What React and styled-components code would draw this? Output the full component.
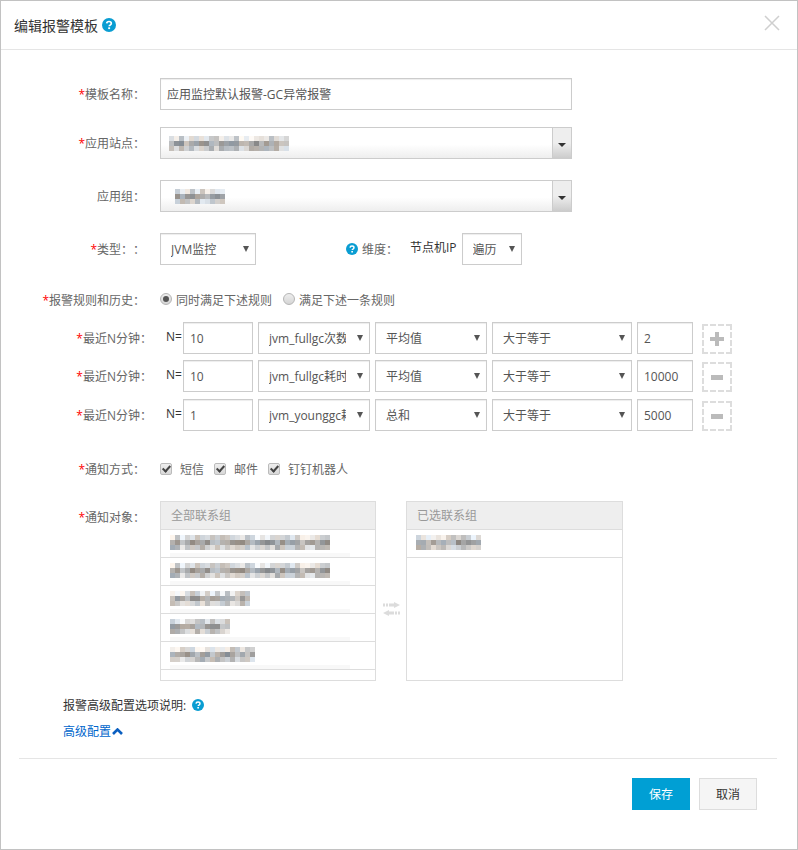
import React from "react";
import styled, { createGlobalStyle } from "styled-components";

const GlobalStyle = createGlobalStyle`
  html, body {
    margin: 0;
    padding: 0;
    background: #fff;
  }
  body {
    font-family: "Open Sans", "Noto Sans CJK SC", sans-serif;
    font-size: 12px;
    color: #666;
  }
`;

// the blurred out names in the screenshot, cells come from a small seeded generator
function mosaicCells(seed, cols, rows) {
  let n = seed;
  const next = () => {
    n = (n * 9301 + 49297) % 233280;
    return n / 233280;
  };
  const base = [220, 168, 202];
  const cells = [];
  for (let r = 0; r < rows; r++) {
    for (let c = 0; c < cols; c++) {
      const v = Math.round(base[r] + (next() - 0.5) * 64);
      const tint = Math.round((next() - 0.5) * 18);
      const g = Math.min(255, Math.max(90, v));
      cells.push({
        r,
        c,
        fill: `rgb(${Math.min(255, g + tint)},${g},${Math.min(255, g - tint)})`,
      });
    }
  }
  return cells;
}

function Mosaic({ seed, cols, rows = 3, size = 5 }) {
  return (
    <svg width={cols * size} height={rows * size} style={{ display: "block" }}>
      {mosaicCells(seed, cols, rows).map((cell) => (
        <rect
          key={`${cell.r}-${cell.c}`}
          x={cell.c * size}
          y={cell.r * size}
          width={size}
          height={size}
          fill={cell.fill}
        />
      ))}
    </svg>
  );
}

function HelpIcon({ size = 12 }) {
  return (
    <svg width={size} height={size} viewBox="0 0 14 14" style={{ display: "block", flex: "none" }}>
      <circle cx="7" cy="7" r="7" fill="#0a9dd2" />
      <path
        d="M4.7 5.4C4.8 4.1 5.8 3.5 7 3.5c1.3 0 2.3.7 2.3 1.9 0 1-.7 1.4-1.3 1.8-.5.3-.7.5-.7 1.1"
        fill="none"
        stroke="#fff"
        strokeWidth="1.7"
      />
      <rect x="6.2" y="9.3" width="1.9" height="1.8" fill="#fff" />
    </svg>
  );
}

function ExchangeIcon() {
  return (
    <svg width="17" height="14" viewBox="0 0 17 14" style={{ display: "block" }}>
      <path d="M0 1.5h2v3H0zM3 1.5h2v3H3zM6 1.5h5v3H6zM11 0l6 3-6 3z" fill="#dcdcdc" />
      <path d="M15 9.5h2v3h-2zM12 9.5h2v3h-2zM6 9.5h5v3H6zM6 8l-6 3 6 3z" fill="#dcdcdc" />
    </svg>
  );
}

const Modal = styled.div`
  width: 798px;
  height: 850px;
  box-sizing: border-box;
  border: 1px solid #c2c2c2;
  display: flex;
  flex-direction: column;
  overflow: hidden;
`;

const Header = styled.div`
  height: 48px;
  flex: none;
  border-bottom: 1px solid #e5e5e5;
  display: flex;
  align-items: center;
  padding: 0 17px 0 13px;
`;

const Title = styled.h4`
  margin: 0 4px 0 0;
  font-size: 14px;
  font-weight: 400;
  color: #333;
`;

const CloseIcon = styled.svg`
  margin: -4px 0 0 auto;
  display: block;
`;

const Form = styled.div`
  padding-top: 28px;
  flex: 1;
`;

const Row = styled.div`
  display: flex;
  align-items: center;
  height: ${(p) => p.$height || 32}px;
  margin-top: ${(p) => p.$top || 0}px;
`;

const Label = styled.label`
  width: ${(p) => p.$width || 144}px;
  flex: none;
  text-align: right;
  text-spacing-trim: space-all;
  color: #666;
  white-space: nowrap;
  margin-right: ${(p) => p.$gap || 15}px;
`;

const Star = styled.span`
  color: #f00;
`;

const TextInput = styled.input`
  box-sizing: border-box;
  width: ${(p) => p.$width}px;
  height: 32px;
  flex: none;
  border: 1px solid #ccc;
  box-shadow: inset 0 1px 1px rgba(0, 0, 0, 0.075);
  padding: 0 6px;
  margin-left: ${(p) => p.$left || 0}px;
  font: inherit;
  color: #555;
  outline: none;
`;

const Combo = styled.div`
  box-sizing: border-box;
  width: 412px;
  height: 32px;
  border: 1px solid #ccc;
  background: linear-gradient(#fff 55%, #eee);
  display: flex;
`;

const ComboValue = styled.div`
  flex: 1;
  display: flex;
  align-items: center;
  padding-left: ${(p) => p.$pad}px;
`;

const ComboArrow = styled.div`
  width: 18px;
  border-left: 1px solid #ccc;
  background: linear-gradient(#eee 50%, #ccc);
  display: flex;
  align-items: center;
  justify-content: center;

  &::after {
    content: "";
    margin-top: 3px;
    border-top: 4px solid #333;
    border-left: 4px solid transparent;
    border-right: 4px solid transparent;
  }
`;

const SelectBox = styled.div`
  position: relative;
  flex: none;
  width: ${(p) => p.$width}px;
  height: 32px;
  margin-left: ${(p) => p.$left || 0}px;

  &::after {
    content: "";
    position: absolute;
    right: 7px;
    top: 13px;
    border-top: 6px solid #555;
    border-left: 3.5px solid transparent;
    border-right: 3.5px solid transparent;
    pointer-events: none;
  }
`;

const NativeSelect = styled.select`
  appearance: none;
  box-sizing: border-box;
  width: 100%;
  height: 100%;
  border: 1px solid #ccc;
  border-radius: 0;
  background: #fff;
  box-shadow: inset 0 1px 1px rgba(0, 0, 0, 0.075);
  padding: 0 23px 0 ${(p) => p.$pad || 10}px;
  font: inherit;
  color: #555;
  outline: none;
`;

const Select = ({ width, left, pad, value }) => (
  <SelectBox $width={width} $left={left}>
    <NativeSelect $pad={pad} defaultValue={value}>
      <option>{value}</option>
    </NativeSelect>
  </SelectBox>
);

const Dimension = styled.div`
  display: flex;
  align-items: center;
  margin-left: 90px;
  gap: 4px;
  color: #666;
`;

const NodeLabel = styled.span`
  margin-left: 12px;
  margin-right: 5px;
  color: #333;
  position: relative;
  top: -2px;
`;

const Options = styled.div`
  display: flex;
  align-items: center;
  color: #666;
`;

const Radio = styled.input.attrs({ type: "radio" })`
  appearance: none;
  box-sizing: border-box;
  width: 12px;
  height: 12px;
  margin: -2px 4px 0 ${(p) => p.$left || 0}px;
  border: 1px solid #b5b5b5;
  border-radius: 50%;
  background: linear-gradient(#eee, #d5d5d5);
  display: flex;
  align-items: center;
  justify-content: center;

  &:checked::after {
    content: "";
    width: 6px;
    height: 6px;
    border-radius: 50%;
    background: #555;
  }
`;

const Check = styled.input.attrs({ type: "checkbox" })`
  appearance: none;
  box-sizing: border-box;
  width: 12px;
  height: 12px;
  margin: 0 8px 0 ${(p) => p.$left || 0}px;
  border: 1px solid #bbb;
  border-radius: 2px;
  background: linear-gradient(#eee, #d8d8d8);
  position: relative;

  &::after {
    content: "";
    position: absolute;
    left: 3px;
    top: 0;
    width: 3px;
    height: 6px;
    border: solid #444;
    border-width: 0 2px 2px 0;
    transform: rotate(42deg);
  }
`;

const RuleN = styled.span`
  width: 17px;
  flex: none;
  color: #333;
  position: relative;
  top: -2px;
`;

const DashedButton = styled.button`
  box-sizing: border-box;
  width: 30px;
  height: 30px;
  margin: 2px 0 0 9px;
  padding: 0;
  flex: none;
  background: #fff;
  border: 2px dashed #ddd;
  display: flex;
  align-items: center;
  justify-content: center;
`;

const Lists = styled.div`
  display: flex;
  align-items: flex-start;
  margin-top: 22px;
`;

const ListLabel = styled(Label)`
  line-height: 34px;
`;

const ListBox = styled.div`
  box-sizing: border-box;
  width: ${(p) => p.$width}px;
  height: 180px;
  border: 1px solid #ddd;
  flex: none;
`;

const ListHead = styled.div`
  box-sizing: border-box;
  height: 28px;
  background: #eee;
  border-bottom: 1px solid #ddd;
  line-height: 27px;
  padding-left: 10px;
  color: #999;
`;

const ListRow = styled.div`
  box-sizing: border-box;
  height: 28px;
  border-bottom: 1px solid #ddd;
  padding: 5px 0 0 ${(p) => p.$pad || 9}px;
`;

const Band = styled.div`
  width: 180px;
  height: 4px;
  margin-top: 3px;
  background: #f8f8f8;
`;

const ExchangeCol = styled.div`
  width: 30px;
  flex: none;
  padding-top: 101px;
  display: flex;
  justify-content: center;
  padding-left: 1px;
  box-sizing: border-box;
`;

const InfoRow = styled.div`
  display: flex;
  align-items: center;
  gap: 6px;
  height: 18px;
  margin: 15px 0 0 62px;
  color: #333;
`;

const AdvancedLink = styled.a`
  display: flex;
  align-items: center;
  gap: 1px;
  height: 18px;
  margin: 8px 0 0 62px;
  color: #0066cc;
`;

const Divider = styled.div`
  height: 1px;
  margin: 18px 20px 0 18px;
  background: #e5e5e5;
`;

const Footer = styled.div`
  display: flex;
  justify-content: flex-end;
  gap: 9px;
  padding: 19px 40px 0 0;
`;

const Button = styled.button`
  box-sizing: border-box;
  width: 58px;
  height: 32px;
  padding: 0;
  font: inherit;
  border: 1px solid ${(p) => (p.$primary ? "#009fd4" : "#ddd")};
  background: ${(p) => (p.$primary ? "#009fd4" : "#f5f5f5")};
  color: ${(p) => (p.$primary ? "#fff" : "#333")};
`;

const rules = [
  { n: "10", metric: "jvm_fullgc次数", agg: "平均值", value: "2", top: 12, add: true },
  { n: "10", metric: "jvm_fullgc耗时", agg: "平均值", value: "10000", top: 6 },
  { n: "1", metric: "jvm_younggc耗时", agg: "总和", value: "5000", top: 7 },
];

const contacts = [
  { seed: 17, cols: 32 },
  { seed: 17, cols: 32 },
  { seed: 91, cols: 16 },
  { seed: 53, cols: 12 },
  { seed: 140, cols: 17 },
];

function App() {
  return (
    <>
      <GlobalStyle />
      <Modal>
        <Header>
          <Title>编辑报警模板</Title>
          <HelpIcon size={14} />
          <CloseIcon width="16" height="16" viewBox="0 0 16 16">
            <path d="M1 1l14 14M15 1L1 15" stroke="#cfcfcf" strokeWidth="1.5" fill="none" />
          </CloseIcon>
        </Header>

        <Form>
          <Row>
            <Label><Star>*</Star>模板名称：</Label>
            <TextInput $width={412} defaultValue="应用监控默认报警-GC异常报警" />
          </Row>
          <Row $top={17}>
            <Label><Star>*</Star>应用站点：</Label>
            <Combo>
              <ComboValue $pad={8}><Mosaic seed={33} cols={24} /></ComboValue>
              <ComboArrow />
            </Combo>
          </Row>
          <Row $top={21}>
            <Label>应用组：</Label>
            <Combo>
              <ComboValue $pad={14}><Mosaic seed={77} cols={10} /></ComboValue>
              <ComboArrow />
            </Combo>
          </Row>
          <Row $top={21}>
            <Label><Star>*</Star>类型：：</Label>
            <Select width={96} value="JVM监控" />
            <Dimension>
              <HelpIcon />
              <span>维度：</span>
            </Dimension>
            <NodeLabel>节点机IP</NodeLabel>
            <Select width={60} value="遍历" />
          </Row>

          <Row $height={20} $top={25}>
            <Label><Star>*</Star>报警规则和历史：</Label>
            <Options>
              <Radio name="mode" defaultChecked />
              <span>同时满足下述规则</span>
              <Radio name="mode" $left={11} />
              <span>满足下述一条规则</span>
            </Options>
          </Row>

          {rules.map((rule, i) => (
            <Row key={i} $top={rule.top}>
              <Label $width={151} $gap={14}><Star>*</Star>最近N分钟：</Label>
              <RuleN>N=</RuleN>
              <TextInput $width={70} defaultValue={rule.n} />
              <Select left={5} width={112} value={rule.metric} />
              <Select left={5} width={112} value={rule.agg} />
              <Select left={5} width={140} value="大于等于" />
              <TextInput $left={5} $width={56} defaultValue={rule.value} />
              <DashedButton>
                {rule.add ? (
                  <svg width="14" height="14" viewBox="0 0 14 14">
                    <path d="M5 0h4v5h5v4H9v5H5V9H0V5h5z" fill="#bbb" />
                  </svg>
                ) : (
                  <svg width="12" height="5" viewBox="0 0 12 5">
                    <rect width="12" height="5" fill="#bbb" />
                  </svg>
                )}
              </DashedButton>
            </Row>
          ))}

          <Row $height={20} $top={28}>
            <Label><Star>*</Star>通知方式：</Label>
            <Options>
              <Check defaultChecked />
              <span>短信</span>
              <Check defaultChecked $left={10} />
              <span>邮件</span>
              <Check defaultChecked $left={10} />
              <span>钉钉机器人</span>
            </Options>
          </Row>

          <Lists>
            <ListLabel><Star>*</Star>通知对象：</ListLabel>
            <ListBox $width={216}>
              <ListHead>全部联系组</ListHead>
              {contacts.map((item, i) => (
                <ListRow key={i}>
                  <Mosaic seed={item.seed} cols={item.cols} />
                  <Band />
                </ListRow>
              ))}
            </ListBox>
            <ExchangeCol>
              <ExchangeIcon />
            </ExchangeCol>
            <ListBox $width={217}>
              <ListHead>已选联系组</ListHead>
              <ListRow $pad={9}>
                <Mosaic seed={205} cols={13} />
              </ListRow>
            </ListBox>
          </Lists>

          <InfoRow>
            <span>报警高级配置选项说明:</span>
            <HelpIcon />
          </InfoRow>
          <AdvancedLink>
            高级配置
            <svg width="11" height="7" viewBox="0 0 11 7">
              <path d="M1 6l4.5-4.5L10 6" fill="none" stroke="#0b5fc0" strokeWidth="2.6" />
            </svg>
          </AdvancedLink>
          <Divider />
          <Footer>
            <Button $primary>保存</Button>
            <Button>取消</Button>
          </Footer>
        </Form>
      </Modal>
    </>
  );
}

export default App;
